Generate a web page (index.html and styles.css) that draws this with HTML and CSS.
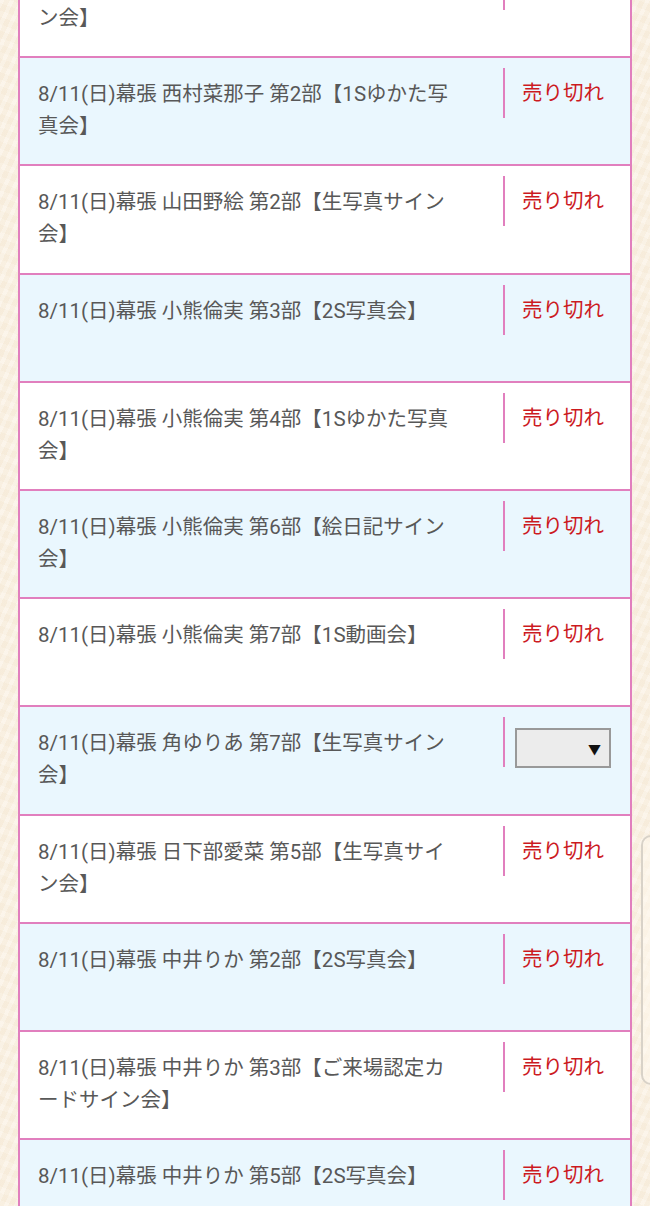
FILE: index.html
```html
<!DOCTYPE html>
<html lang="ja">
<head>
    <meta charset="UTF-8">
    <meta name="viewport" content="width=device-width, initial-scale=1.0">
    <title>個別握手会 受付状況</title>
    <link rel="stylesheet" href="styles.css">
</head>
<body>
    <div class="list">
        <div class="row">
            <div class="name">8/11(日)幕張 西村菜那子 第1部【生写真サイン会】</div>
            <div class="status"><span class="soldout">売り切れ</span></div>
        </div>
        <div class="row blue">
            <div class="name">8/11(日)幕張 西村菜那子 第2部【1Sゆかた写真会】</div>
            <div class="status"><span class="soldout">売り切れ</span></div>
        </div>
        <div class="row">
            <div class="name">8/11(日)幕張 山田野絵 第2部【生写真サイン会】</div>
            <div class="status"><span class="soldout">売り切れ</span></div>
        </div>
        <div class="row blue">
            <div class="name">8/11(日)幕張 小熊倫実 第3部【2S写真会】</div>
            <div class="status"><span class="soldout">売り切れ</span></div>
        </div>
        <div class="row">
            <div class="name">8/11(日)幕張 小熊倫実 第4部【1Sゆかた写真会】</div>
            <div class="status"><span class="soldout">売り切れ</span></div>
        </div>
        <div class="row blue">
            <div class="name">8/11(日)幕張 小熊倫実 第6部【絵日記サイン会】</div>
            <div class="status"><span class="soldout">売り切れ</span></div>
        </div>
        <div class="row">
            <div class="name">8/11(日)幕張 小熊倫実 第7部【1S動画会】</div>
            <div class="status"><span class="soldout">売り切れ</span></div>
        </div>
        <div class="row blue">
            <div class="name">8/11(日)幕張 角ゆりあ 第7部【生写真サイン会】</div>
            <div class="status">
                <div class="select"><span class="arrow">▼</span></div>
            </div>
        </div>
        <div class="row">
            <div class="name">8/11(日)幕張 日下部愛菜 第5部【生写真サイン会】</div>
            <div class="status"><span class="soldout">売り切れ</span></div>
        </div>
        <div class="row blue">
            <div class="name">8/11(日)幕張 中井りか 第2部【2S写真会】</div>
            <div class="status"><span class="soldout">売り切れ</span></div>
        </div>
        <div class="row">
            <div class="name">8/11(日)幕張 中井りか 第3部【ご来場認定カードサイン会】</div>
            <div class="status"><span class="soldout">売り切れ</span></div>
        </div>
        <div class="row blue">
            <div class="name">8/11(日)幕張 中井りか 第5部【2S写真会】</div>
            <div class="status"><span class="soldout">売り切れ</span></div>
        </div>
    </div>
    <div class="side-tab"></div>
</body>
</html>
```

FILE: styles.css
```css
body {
    margin: 0;
    font-family: Roboto, "Noto Sans CJK JP", sans-serif;
    background-color: #faf1e3;
    background-image:
        repeating-linear-gradient(115deg, rgba(255,255,255,0.18) 0 4px, rgba(238,222,196,0.14) 4px 9px),
        repeating-linear-gradient(20deg, rgba(255,255,255,0.12) 0 6px, rgba(236,220,194,0.12) 6px 13px);
    overflow: hidden;
}

.list {
    margin: -50px 18px 0;
    border-left: 2px solid #e17fbe;
    border-right: 2px solid #e17fbe;
    background: #fff;
}

.row {
    display: flex;
    height: 106.2px;
    border-bottom: 2px solid #e17fbe;
    background: #fff;
}

.row.blue { background: #eaf7fe; }

.name {
    flex: 1;
    padding: 20px 45px 0 18px;
    font-size: 20.5px;
    line-height: 32px;
    color: #585858;
}

.status {
    width: 127px;
    height: 50px;
    margin-top: 10px;
    border-left: 2px solid #e17fbe;
    padding-left: 17px;
    box-sizing: border-box;
}

.soldout {
    font-size: 20.5px;
    line-height: 50px;
    color: #cc1a1f;
}

.select {
    margin: 11px 0 0 -7px;
    width: 96px;
    height: 40px;
    box-sizing: border-box;
    border: 2px solid #999;
    background: #ececec;
    display: flex;
    align-items: center;
    justify-content: flex-end;
    padding-right: 8px;
}

.arrow {
    font-size: 13px;
    color: #111;
}

.side-tab {
    position: fixed;
    left: 641px;
    top: 835px;
    width: 30px;
    height: 246px;
    border: 2px solid #d8d2c8;
    border-radius: 10px;
    background: rgba(255, 250, 240, 0.5);
}
```
